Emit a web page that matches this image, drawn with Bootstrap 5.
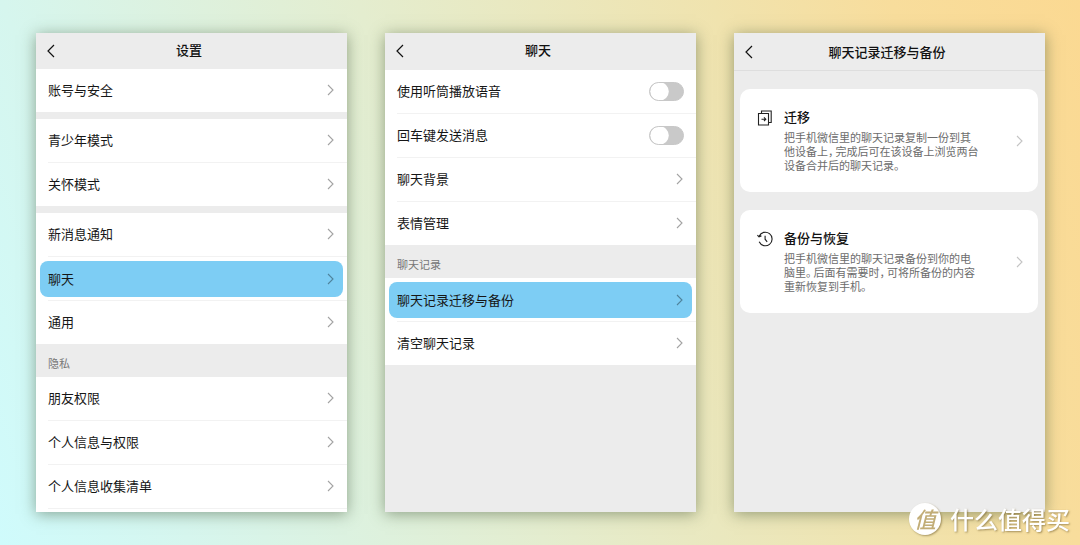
<!DOCTYPE html>
<html lang="zh-CN">
<head>
<meta charset="utf-8">
<meta name="viewport" content="width=device-width, initial-scale=1">
<title>聊天记录迁移与备份</title>
<link href="https://cdn.jsdelivr.net/npm/bootstrap@5.3.0/dist/css/bootstrap.min.css" rel="stylesheet">
<style>
  body { font-family: "Noto Sans CJK SC", sans-serif; font-size: 13px; line-height: 20px; color: #161616;
    background: linear-gradient(71deg, #cffbfc 0%, #d6f6ee 15%, #e4edcf 43%, #f0e3ae 71%, #f8dd9c 85%, #fbd992 100%) no-repeat; }
  .stage { padding: 33px 35px 33px 36px; gap: 38px; }
  .phone { flex: 1 1 0; min-width: 0; background: #ececec; box-shadow: 0 2px 14px rgba(60, 80, 50, .5); }
  .bar { height: 36px; padding: 0 12px 0 11px; display: grid; grid-template-columns: 20px 1fr 24px; align-items: center; }
  .bar.mid { height: 37px; padding-bottom: 1px; }
  .bar.tall { height: 38px; border-bottom: 1px solid #dedede; }
  .bar h1 { font-size: 13px; line-height: 20px; font-weight: 500; margin: 0; padding-bottom: 2px; text-align: center; color: #111; }
  .bar.tall h1 { padding-bottom: 0; }
  .bar button { padding: 0; border: 0; background: none; display: flex; color: #111; }
  .rows { background: #fff; margin: 0; padding: 0; list-style: none; }
  .rows > li { display: flow-root; }
  .rows > li + li::before, .rows.open::after { content: ""; display: block; height: 1px; margin-left: 12px; background: #f2f2f2; }
  .rows.open { padding-bottom: 3px; }
  .entry { height: 43px; padding: 0 12px 1px; display: flex; align-items: center; justify-content: space-between; color: inherit; text-decoration: none; }
  .entry svg, .pick svg { color: #a3a3a3; margin-right: 1px; flex: none; }
  .entry.hot { height: 36px; margin: 4px 4px 3px; padding: 0 8px 1px; border-radius: 8px; background: #7dcdf4; }
  .entry.hot svg { color: #4f839c; }
  .band { height: 7px; }
  .caption-row { height: 33px; padding: 8px 12px 0; font-size: 11px; line-height: 22px; font-weight: 400; margin: 0; color: #777; }
  .entry .form-check-input { width: 35px; height: 19px; margin: 0; border: 1px solid #c8c8c8; background-color: #c9c9c9;
    background-size: 19px 19px; box-shadow: none;
    --bs-form-switch-bg: url("data:image/svg+xml,%3csvg xmlns='http://www.w3.org/2000/svg' viewBox='-4 -4 8 8'%3e%3ccircle r='3.9' fill='%23fff'/%3e%3c/svg%3e"); }
  .picks { padding: 18px 7px 18px 6px; gap: 18px; }
  .pick { min-height: 103px; padding: 18px 14px 18px 17px; border-radius: 10px; background: #fff; gap: 11px; color: inherit; text-decoration: none; }
  .pick h2 { font-size: 13px; line-height: 20px; font-weight: 500; margin: 0; color: #111; }
  .pick p { font-size: 11px; line-height: 14px; margin: 3px 0 0; color: #6c6c6c; white-space: nowrap; }
  .pick .half { font-feature-settings: "halt"; padding-right: 2px; }
  .pick .glyph { color: #222; margin: 3px 0 0; }
  .pick .go { color: #c4c4c4; }
  .brand { position: fixed; right: 10px; bottom: 9px; gap: 9px; color: #fff; font-size: 24px; line-height: 34px; text-shadow: 1px 1px 2px rgba(120, 100, 50, .65); }
  .brand .name { font-weight: 500; }
  .brand .seal { width: 32px; height: 32px; border-radius: 50%; background: #fff; color: #c2ad77; font-size: 22px; line-height: 30px; font-weight: 500;
    text-shadow: none; box-shadow: 1px 1px 2px rgba(120, 100, 50, .6); font-style: italic; }
</style>
</head>
<body>
<svg class="d-none" aria-hidden="true">
  <symbol id="next" viewBox="0 0 7 12"><path d="M1 1l5 5-5 5" fill="none" stroke="currentColor" stroke-width="1.1"/></symbol>
  <symbol id="back" viewBox="0 0 8 14"><path d="M7 1L1 7l6 6" fill="none" stroke="currentColor" stroke-width="1.2"/></symbol>
</svg>
<main class="stage d-flex align-items-stretch min-vh-100">
  <section class="phone">
    <header class="bar"><button type="button" aria-label="返回"><svg width="8" height="14"><use href="#back"/></svg></button><h1>设置</h1></header>
    <ul class="rows">
      <li><a class="entry" href="#">账号与安全<svg width="7" height="12"><use href="#next"/></svg></a></li>
    </ul>
    <div class="band"></div>
    <ul class="rows">
      <li><a class="entry" href="#">青少年模式<svg width="7" height="12"><use href="#next"/></svg></a></li>
      <li><a class="entry" href="#">关怀模式<svg width="7" height="12"><use href="#next"/></svg></a></li>
    </ul>
    <div class="band"></div>
    <ul class="rows">
      <li><a class="entry" href="#">新消息通知<svg width="7" height="12"><use href="#next"/></svg></a></li>
      <li><a class="entry hot" href="#">聊天<svg width="7" height="12"><use href="#next"/></svg></a></li>
      <li><a class="entry" href="#">通用<svg width="7" height="12"><use href="#next"/></svg></a></li>
    </ul>
    <h2 class="caption-row">隐私</h2>
    <ul class="rows open">
      <li><a class="entry" href="#">朋友权限<svg width="7" height="12"><use href="#next"/></svg></a></li>
      <li><a class="entry" href="#">个人信息与权限<svg width="7" height="12"><use href="#next"/></svg></a></li>
      <li><a class="entry" href="#">个人信息收集清单<svg width="7" height="12"><use href="#next"/></svg></a></li>
    </ul>
  </section>

  <section class="phone">
    <header class="bar mid"><button type="button" aria-label="返回"><svg width="8" height="14"><use href="#back"/></svg></button><h1>聊天</h1></header>
    <ul class="rows">
      <li class="form-switch p-0"><div class="entry"><label for="earpiece">使用听筒播放语音</label><input class="form-check-input" type="checkbox" role="switch" id="earpiece"></div></li>
      <li class="form-switch p-0"><div class="entry"><label for="enter">回车键发送消息</label><input class="form-check-input" type="checkbox" role="switch" id="enter"></div></li>
      <li><a class="entry" href="#">聊天背景<svg width="7" height="12"><use href="#next"/></svg></a></li>
      <li><a class="entry" href="#">表情管理<svg width="7" height="12"><use href="#next"/></svg></a></li>
    </ul>
    <h2 class="caption-row">聊天记录</h2>
    <ul class="rows">
      <li><a class="entry hot" href="#">聊天记录迁移与备份<svg width="7" height="12"><use href="#next"/></svg></a></li>
      <li><a class="entry" href="#">清空聊天记录<svg width="7" height="12"><use href="#next"/></svg></a></li>
    </ul>
  </section>

  <section class="phone">
    <header class="bar tall"><button type="button" aria-label="返回"><svg width="8" height="14"><use href="#back"/></svg></button><h1>聊天记录迁移与备份</h1></header>
    <div class="picks d-flex flex-column">
      <a class="pick d-flex" href="#">
        <svg class="glyph" width="16" height="16" viewBox="0 0 16 16" fill="none" stroke="currentColor" stroke-width="1.1"><path d="M1.5 3.5h10v11.5h-10zM4.5 3.5V1H14.2v11.5h-2.7M4.5 9.2h4M7 7.4l1.8 1.8L7 11"/></svg>
        <div class="flex-grow-1"><h2>迁移</h2><p>把手机微信里的聊天记录复制一份到其<br>他设备上<span class="half">，</span>完成后可在该设备上浏览两台<br>设备合并后的聊天记录。</p></div>
        <svg class="go align-self-center" width="7" height="12"><use href="#next"/></svg>
      </a>
      <a class="pick d-flex" href="#">
        <svg class="glyph" width="16" height="16" viewBox="0 0 17 17" fill="none" stroke="currentColor" stroke-width="1.2"><path d="M2.3 5.5A7.2 7.2 0 1 1 2.3 11.5M.4 4.3l1.7 1.9 2.6-1M8.6 5.1v3.6l2.2 2.8"/></svg>
        <div class="flex-grow-1"><h2>备份与恢复</h2><p>把手机微信里的聊天记录备份到你的电<br>脑里<span class="half">。</span>后面有需要时<span class="half">，</span>可将所备份的内容<br>重新恢复到手机。</p></div>
        <svg class="go align-self-center" width="7" height="12"><use href="#next"/></svg>
      </a>
    </div>
  </section>
</main>
<div class="brand d-flex align-items-center"><span class="seal text-center">值</span><span class="name">什么值得买</span></div>
</body>
</html>
